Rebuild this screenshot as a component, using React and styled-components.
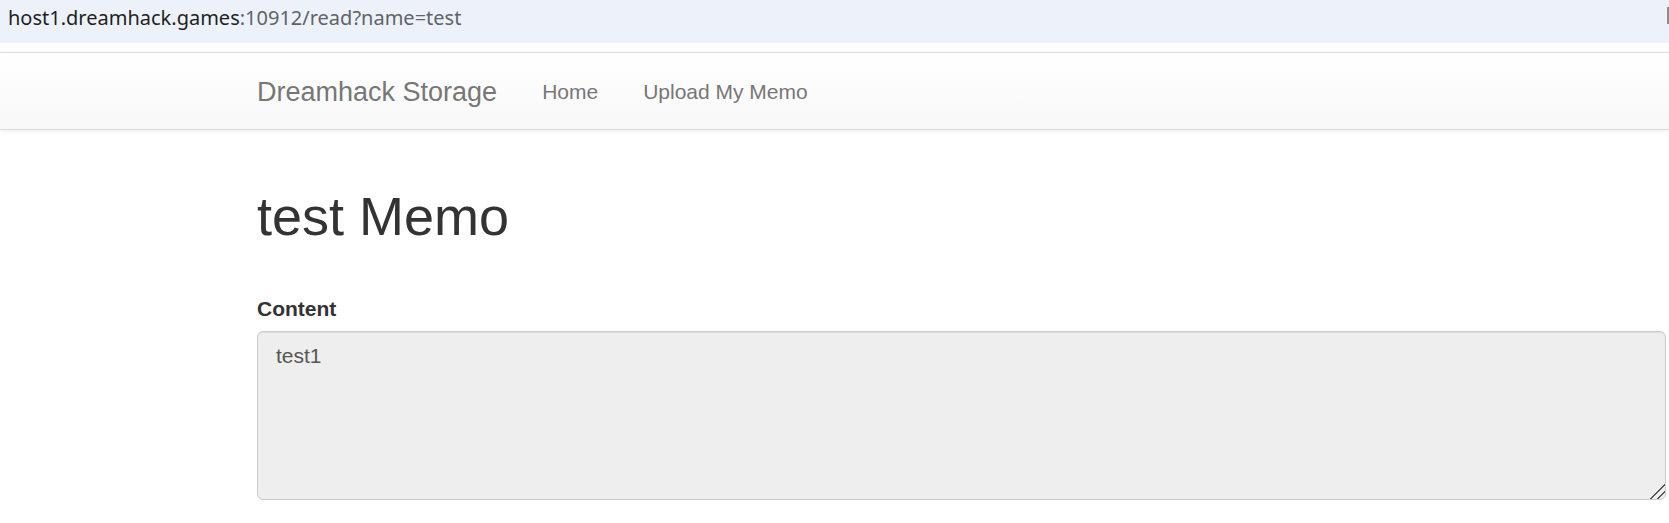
import React from 'react';
import styled, { createGlobalStyle } from 'styled-components';

const GlobalStyle = createGlobalStyle`
  html, body {
    margin: 0;
    padding: 0;
    background: #fff;
    overflow: hidden;
  }
  body {
    font-family: 'Liberation Sans', Arial, sans-serif;
    color: #333;
  }
`;

const AddressBar = styled.div`
  height: 43px;
  box-sizing: border-box;
  background: #edf2fa;
  display: flex;
  align-items: flex-start;
  justify-content: space-between;
  padding: 4px 0 0 8px;
  font-family: 'Noto Sans', 'Open Sans', sans-serif;
  font-size: 20px;
  line-height: 27px;
`;

const Url = styled.div`
  color: #5f6368;
  white-space: nowrap;
`;

const Host = styled.span`
  color: #1f1f1f;
`;

const ScrollMark = styled.div`
  margin-top: 3px;
  width: 2px;
  height: 17px;
  background: #8d8d8d;
`;

const Navbar = styled.nav`
  margin-top: 9px;
  height: 76px;
  border-top: 1px solid #dedede;
  border-bottom: 1px solid #dadada;
  background-image: linear-gradient(to bottom, #fff 0, #f8f8f8 100%);
  box-shadow: 0 1px 5px rgba(0, 0, 0, 0.075);
`;

const NavInner = styled.div`
  margin-left: 257px;
  display: flex;
  align-items: flex-start;
`;

const Brand = styled.a`
  font-size: 27px;
  line-height: 30px;
  color: #777;
  padding: 23.5px 22.5px 0 0;
  text-decoration: none;
`;

const NavLink = styled.a`
  font-size: 21px;
  line-height: 30px;
  color: #777;
  padding: 24px 22.5px 0;
  text-decoration: none;
`;

const Container = styled.main`
  margin-left: 257px;
  width: 1409px;
`;

const Title = styled.h1`
  font-size: 54px;
  font-weight: 500;
  line-height: 59.4px;
  color: #333;
  margin: 56.5px 0 0;
`;

const FormGroup = styled.div`
  margin-top: 47.75px;
`;

const Label = styled.label`
  display: block;
  font-size: 21px;
  font-weight: 700;
  line-height: 30px;
  color: #333;
  margin-bottom: 7.5px;
`;

const MemoBox = styled.textarea`
  display: block;
  box-sizing: border-box;
  width: 1409px;
  height: 169px;
  margin: 0;
  padding: 9px 18px;
  border: 1px solid #ccc;
  border-radius: 6px;
  background: #eee;
  box-shadow: inset 0 1px 1px rgba(0, 0, 0, 0.075);
  font-family: 'Liberation Sans', Arial, sans-serif;
  font-size: 21px;
  line-height: 30px;
  color: #555;
  outline: none;

  &::-webkit-resizer {
    background: linear-gradient(
      135deg,
      transparent 0 48%,
      #555 48% 56%,
      transparent 56% 70%,
      #555 70% 78%,
      transparent 78%
    );
  }
`;

export default function App() {
  return (
    <>
      <GlobalStyle />
      <AddressBar>
        <Url>
          <Host>host1.dreamhack.games</Host>:10912/read?name=test
        </Url>
        <ScrollMark />
      </AddressBar>
      <Navbar>
        <NavInner>
          <Brand href="#">Dreamhack Storage</Brand>
          <NavLink href="#">Home</NavLink>
          <NavLink href="#">Upload My Memo</NavLink>
        </NavInner>
      </Navbar>
      <Container>
        <Title>test Memo</Title>
        <FormGroup>
          <Label htmlFor="content">Content</Label>
          <MemoBox id="content" readOnly defaultValue="test1" />
        </FormGroup>
      </Container>
    </>
  );
}
